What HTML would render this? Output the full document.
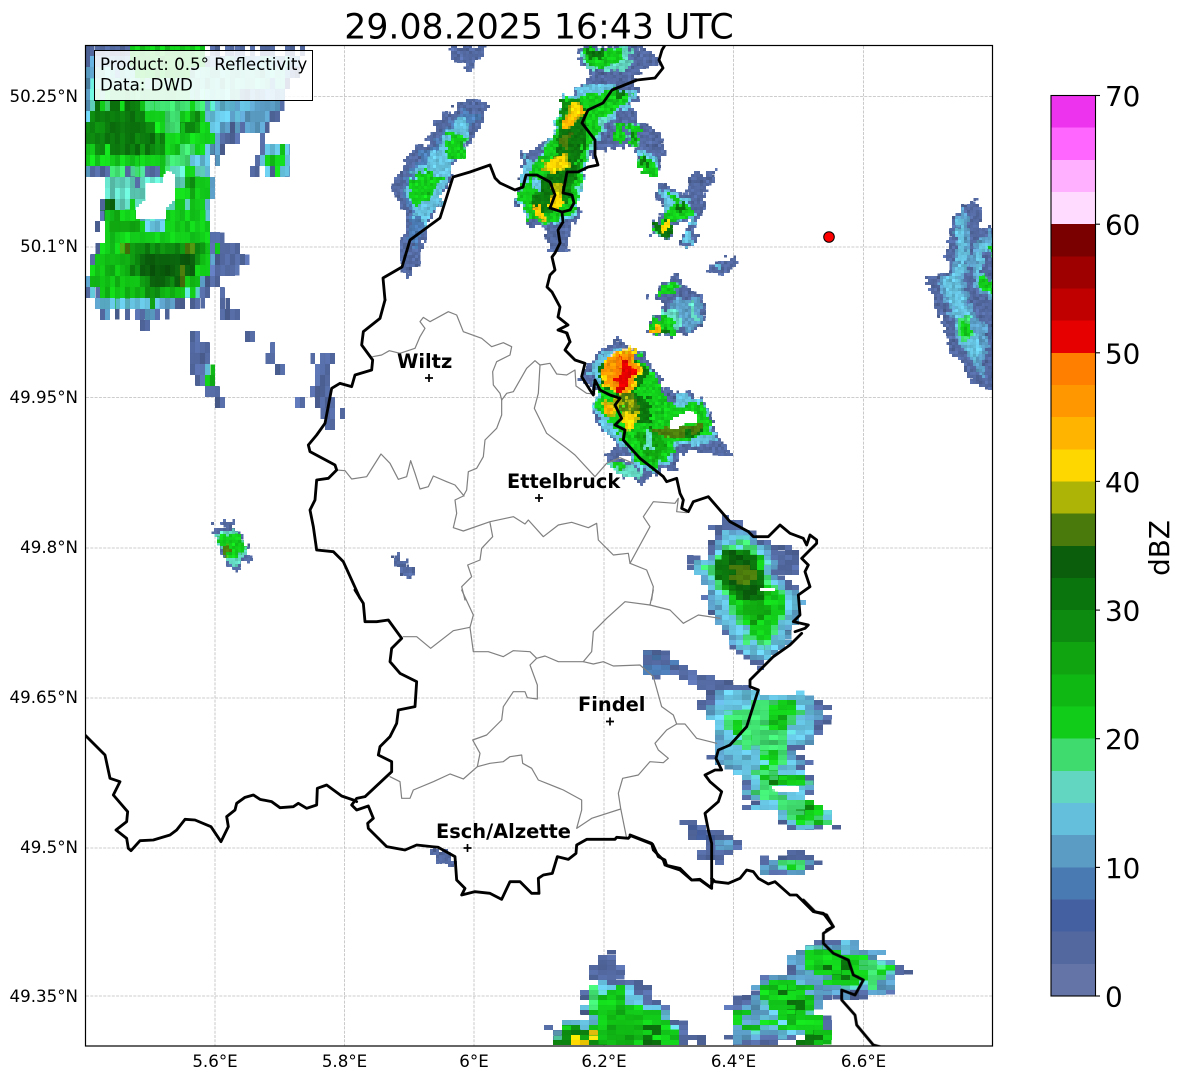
<!DOCTYPE html>
<html><head><meta charset="utf-8"><title>Radar</title>
<style>
html,body{margin:0;padding:0;background:#fff;width:1184px;height:1081px;overflow:hidden}
svg{display:block;font-family:"DejaVu Sans",sans-serif}
polygon{shape-rendering:crispEdges}
.b1{fill:#52689f}.b2{fill:#4560a0}.b3{fill:#4a7ab2}.c1{fill:#5a9cc4}.c2{fill:#64bfdc}.t{fill:#62d6c0}.l{fill:#3fdb6e}
.g{fill:#12cc1a}.g2{fill:#10b814}.g3{fill:#10a510}.g4{fill:#0d8a10}.g5{fill:#0b750d}.g6{fill:#0a5e0c}.ol{fill:#4a7a0c}.oy{fill:#aeb405}
.y{fill:#ffd700}.go{fill:#ffb400}.o{fill:#ff9800}.o2{fill:#ff7f00}.r{fill:#e60000}.w{fill:#fff}
.bd{fill:none;stroke:#000;stroke-width:8.5;stroke-linejoin:round;stroke-linecap:round}
.bs{fill:none;stroke:#000;stroke-width:2.83;stroke-linejoin:round;stroke-linecap:round}
.gy{fill:none;stroke:#808080;stroke-width:3.6;stroke-linejoin:round;stroke-linecap:round}
.tk{font-size:16.67px;fill:#000}
.cb{font-size:27.8px;fill:#000}
.lb{font-size:19.4px;font-weight:bold;fill:#000}
.gr{stroke:#bdbdbd;stroke-width:.8;stroke-dasharray:3 1.3}
</style></head>
<body>
<svg width="1184" height="1081" viewBox="0 0 1184 1081" xmlns="http://www.w3.org/2000/svg">
<defs>
<clipPath id="ax"><rect x="85.5" y="45.5" width="907" height="1000.5"/></clipPath>
<filter id="f3" filterUnits="userSpaceOnUse" x="85" y="45" width="908" height="1002" color-interpolation-filters="sRGB">
<feTurbulence type="fractalNoise" baseFrequency=".12" numOctaves="2" seed="3" result="n"/>
<feDisplacementMap in="SourceGraphic" in2="n" scale="14" xChannelSelector="R" yChannelSelector="G" result="d"/>
<feTurbulence type="fractalNoise" baseFrequency=".25" numOctaves="2" seed="8"/>
<feColorMatrix type="matrix" values="1 0 0 0 0 1 0 0 0 0 1 0 0 0 0 0 0 0 0 1" result="s"/>
<feComposite in="d" in2="s" operator="arithmetic" k1=".6" k2=".7" result="m"/>
<feFlood x="86" y="46" width="1" height="1"/><feComposite x="85" y="45" width="3" height="3"/><feTile x="85" y="45" width="908" height="1002" result="a"/><feComposite in="m" in2="a" operator="in"/><feMorphology operator="dilate" radius="1"/>
</filter>
<filter id="f30" filterUnits="userSpaceOnUse" x="85" y="45" width="908" height="1002" color-interpolation-filters="sRGB">
<feFlood x="86" y="46" width="1" height="1"/><feComposite x="85" y="45" width="3" height="3"/><feTile x="85" y="45" width="908" height="1002" result="a"/><feComposite in="SourceGraphic" in2="a" operator="in"/><feMorphology operator="dilate" radius="1"/>
</filter>
<filter id="fv" filterUnits="userSpaceOnUse" x="85" y="45" width="908" height="1002" color-interpolation-filters="sRGB">
<feTurbulence type="fractalNoise" baseFrequency=".12 .03" numOctaves="2" seed="5" result="n"/>
<feDisplacementMap in="SourceGraphic" in2="n" scale="22" xChannelSelector="R" yChannelSelector="G" result="d"/>
<feTurbulence type="fractalNoise" baseFrequency=".2 .08" numOctaves="2" seed="11"/>
<feColorMatrix type="matrix" values="1 0 0 0 0 1 0 0 0 0 1 0 0 0 0 0 0 0 0 1" result="s"/>
<feComposite in="d" in2="s" operator="arithmetic" k1=".6" k2=".7" result="m"/>
<feFlood x="87" y="50" width="1" height="1"/><feComposite x="85" y="45" width="5" height="11"/><feTile x="85" y="45" width="908" height="1002" result="a"/><feComposite in="m" in2="a" operator="in"/><feMorphology operator="dilate" radius="2 5"/>
</filter>
<filter id="fh" filterUnits="userSpaceOnUse" x="85" y="45" width="908" height="1002" color-interpolation-filters="sRGB">
<feTurbulence type="fractalNoise" baseFrequency=".03 .12" numOctaves="2" seed="7" result="n"/>
<feDisplacementMap in="SourceGraphic" in2="n" scale="22" xChannelSelector="R" yChannelSelector="G" result="d"/>
<feTurbulence type="fractalNoise" baseFrequency=".08 .2" numOctaves="2" seed="13"/>
<feColorMatrix type="matrix" values="1 0 0 0 0 1 0 0 0 0 1 0 0 0 0 0 0 0 0 1" result="s"/>
<feComposite in="d" in2="s" operator="arithmetic" k1=".6" k2=".7" result="m"/>
<feFlood x="89" y="47" width="1" height="1"/><feComposite x="85" y="45" width="9" height="5"/><feTile x="85" y="45" width="908" height="1002" result="a"/><feComposite in="m" in2="a" operator="in"/><feMorphology operator="dilate" radius="4 2"/>
</filter>
<filter id="fm" filterUnits="userSpaceOnUse" x="85" y="45" width="908" height="1002" color-interpolation-filters="sRGB">
<feTurbulence type="fractalNoise" baseFrequency=".06 .12" numOctaves="2" seed="21" result="n"/>
<feDisplacementMap in="SourceGraphic" in2="n" scale="18" xChannelSelector="R" yChannelSelector="G" result="d"/>
<feTurbulence type="fractalNoise" baseFrequency=".12 .22" numOctaves="2" seed="17"/>
<feColorMatrix type="matrix" values="1 0 0 0 0 1 0 0 0 0 1 0 0 0 0 0 0 0 0 1" result="s"/>
<feComposite in="d" in2="s" operator="arithmetic" k1=".6" k2=".7" result="m"/>
<feFlood x="88" y="47" width="1" height="1"/><feComposite x="85" y="45" width="7" height="5"/><feTile x="85" y="45" width="908" height="1002" result="a"/><feComposite in="m" in2="a" operator="in"/><feMorphology operator="dilate" radius="3 2"/>
</filter>
</defs>
<rect width="1184" height="1081" fill="#fff"/>

<!-- grid -->
<g class="gr">
<line x1="215" y1="46" x2="215" y2="1046"/><line x1="344.5" y1="46" x2="344.5" y2="1046"/><line x1="474" y1="46" x2="474" y2="1046"/><line x1="604" y1="46" x2="604" y2="1046"/><line x1="733.5" y1="46" x2="733.5" y2="1046"/><line x1="863.5" y1="46" x2="863.5" y2="1046"/>
<line x1="86" y1="96.5" x2="992" y2="96.5"/><line x1="86" y1="247" x2="992" y2="247"/><line x1="86" y1="397.5" x2="992" y2="397.5"/><line x1="86" y1="548" x2="992" y2="548"/><line x1="86" y1="698" x2="992" y2="698"/><line x1="86" y1="848" x2="992" y2="848"/><line x1="86" y1="996" x2="992" y2="996"/>
</g>

<g clip-path="url(#ax)">
<!-- West storms: vertical streaks -->
<g filter="url(#fv)">
<g transform="translate(85 40) scale(.33333)">
<polygon class="b1" points="-20,20 100,20 100,30 140,20 440,20 440,30 530,20 645,20 640,110 590,190 565,245 530,295 450,290 420,340 388,345 388,560 405,605 480,605 482,660 470,695 412,700 408,725 380,735 378,765 352,768 340,800 270,812 180,822 175,858 165,855 160,822 40,835 30,795 20,740 8,685 5,650 45,640 50,575 55,480 60,415 -20,412"/>
<polygon class="c1" points="-20,135 30,50 630,50 620,110 580,190 555,225 520,265 430,260 400,300 385,345 385,540 372,600 392,615 392,670 360,735 300,780 270,785 260,810 170,815 40,830 25,760 12,680 45,650 55,570 60,450 60,415 180,425 270,400 280,385 -20,385"/>
<polygon class="c2" points="-20,235 20,190 380,190 425,190 490,205 480,235 420,240 385,290 380,380 378,500 372,600 392,625 350,720 270,770 170,800 40,815 25,740 50,650 70,500 60,420 180,425 270,395 290,380 -20,380"/>
<polygon class="t" points="30,100 620,60 600,130 360,185 300,380 380,390 370,520 250,500 60,560 55,420 180,420 260,380 -20,370"/>
<polygon class="g" points="140,20 360,20 355,60 300,120 180,130 130,70"/>
<polygon class="l" points="30,160 150,130 300,150 370,180 380,300 250,395 100,395 -20,370"/>
<polygon class="g" points="-20,258 40,190 180,190 195,215 215,190 240,195 240,265 300,265 300,200 370,205 385,305 350,340 290,300 280,330 240,370 240,395 100,385 100,380 -20,372"/>
<polygon class="g" points="285,400 375,410 372,500 285,500"/>
<polygon class="g" points="240,510 372,510 372,600 390,610 390,670 355,710 350,735 290,770 170,785 130,785 45,795 25,730 15,690 20,650 50,640 55,570 90,540 55,530 55,495 150,500 160,560 240,565"/>
<polygon class="g2" points="20,660 140,600 380,610 370,690 280,770 130,785 50,780"/>
<polygon class="g4" points="-20,240 175,200 240,300 245,350 150,350 30,320 -20,300"/>
<polygon class="g5" points="50,195 175,195 180,240 230,320 150,340 60,320 55,260"/>
<polygon class="g4" points="285,235 340,230 375,270 340,290 300,265"/>
<polygon class="g4" points="130,610 340,605 345,640 325,700 280,740 180,785 165,745 135,680"/>
<polygon class="g6" points="150,650 320,640 320,700 220,745 170,700"/>
<polygon class="g4" points="300,430 340,440 335,465 300,470"/>
<polygon class="g6" points="55,495 75,495 75,535 55,530"/>
<polygon class="g3" points="90,530 150,540 160,570 60,570"/>
<polygon class="ol" points="115,605 130,605 130,640 115,640"/>
<polygon class="ol" points="295,605 320,605 315,635 300,640 298,700 292,700"/>
<polygon class="ol" points="275,710 292,710 288,740 275,738"/>
<polygon class="b1" points="500,360 530,340 555,305 610,315 610,395 580,400 578,425 555,425 555,395 510,390 508,420 498,420"/>
<polygon class="c2" points="530,370 555,310 605,320 605,395 530,390"/>
<polygon class="g" points="555,340 595,340 590,395 555,395"/>
<polygon class="b1" points="420,760 430,760 435,790 460,790 480,820 478,850 420,855 412,800"/>
</g>
<polygon class="b1" points="187,335 200,330 212,350 213,372 222,400 215,405 205,385 192,372 185,350"/>
<polygon class="c2" points="205,365 213,368 217,385 210,385"/>
<polygon class="g" points="210,372 218,372 219,384 212,384"/>
<polygon class="b1" points="247,335 252,335 254,350 248,350"/>
<polygon class="b1" points="265,350 272,350 285,378 282,385 272,372"/>
<polygon class="b1" points="292,396 300,392 303,410 297,412"/>
<polygon class="b1" points="312,358 328,357 333,390 339,430 328,430 322,420 310,385"/>
</g>

<!-- fine-grain storms -->
<g filter="url(#f3)">
<polygon class="b1" points="450,46 485,46 480,60 470,70 460,62 450,58"/>
<polygon class="b1" points="470,98 490,105 480,130 455,165 450,180 430,220 420,260 410,278 400,260 405,220 393,185 410,150 430,140 435,120"/>
<polygon class="b3" points="465,110 478,115 450,170 430,215 415,250 408,240 412,215 402,190 420,155 440,135"/>
<polygon class="c2" points="460,118 470,125 455,160 440,200 425,225 415,215 405,190 415,170 435,150"/>
<polygon class="g" points="448,132 468,135 462,160 448,160"/>
<polygon class="g" points="410,178 430,170 442,180 430,200 412,205"/>
<polygon class="b1" points="213,528 232,520 253,558 235,570 222,555"/>
<polygon class="t" points="215,538 232,525 248,552 235,568 224,552"/>
<polygon class="g" points="218,540 238,532 247,550 232,558 226,552"/>
<polygon class="ol" points="222,542 230,542 230,558 225,558"/>
<polygon class="b1" points="391,557 398,556 415,572 410,580 400,574"/>
<polygon class="b1" points="430,848 446,850 458,864 452,868 436,858"/>
<polygon class="b1" points="925,280 950,270 958,225 978,200 982,230 1000,225 1000,388 975,385 950,350 943,320"/>

<g transform="translate(900 190) scale(.33333)">
<polygon class="b1" points="230,25 225,100 240,130 290,105 290,600 240,595 210,540 150,470 130,370 80,285 85,265 120,250 170,235 135,210 150,130 165,70 200,40"/>
<polygon class="c1" points="170,90 195,60 215,110 200,230 240,130 290,130 290,340 230,300 215,230 190,260 210,350 270,420 255,500 250,570 215,520 165,440 145,340 100,280 160,250 170,210"/>
<polygon class="c2" points="170,90 190,90 200,230 175,260 205,370 235,480 225,530 175,440 150,340 130,280 160,255 175,220"/>
<polygon class="c2" points="228,185 290,135 290,340 235,290"/>
<polygon class="b1" points="245,190 290,175 290,300 250,250"/>
<polygon class="g" points="235,258 252,255 290,290 290,322 245,300"/>
<polygon class="g" points="268,170 290,170 290,195 268,195"/>
<polygon class="l" points="170,385 210,370 220,430 195,460 175,420"/>
<polygon class="g" points="178,395 200,390 217,420 200,450 185,420"/>
</g>

<g transform="translate(500 40) scale(.33333)">
<polygon class="b1" points="235,20 420,20 470,50 480,70 400,115 420,155 395,200 415,240 490,285 490,340 475,410 410,380 405,320 340,325 290,335 260,360 265,390 235,440 240,525 215,555 205,635 140,640 140,560 90,555 95,530 40,490 50,460 70,430 60,340 100,330 155,285 195,170 265,130 270,90 230,60"/>
<polygon class="t" points="235,40 300,25 400,25 380,80 330,100 265,90"/>
<polygon class="c2" points="195,170 265,135 340,140 410,155 380,215 320,240 300,300 270,340 255,395 235,500 225,530 190,550 95,540 45,480 70,440 70,345 100,370 150,290"/>
<polygon class="t" points="190,180 340,150 390,170 320,240 290,300 255,370 230,520 130,545 60,480 100,370 155,290"/>
<polygon class="g" points="250,30 360,25 370,60 300,90 260,70"/>
<polygon class="g5" points="260,30 320,30 310,60 275,60"/>
<polygon class="g" points="195,175 260,165 340,150 400,160 370,200 300,240 290,290 260,330 245,400 240,440 225,520 130,550 95,540 45,470 75,435 95,380 150,300 175,240"/>
<polygon class="g4" points="185,180 250,175 260,230 255,320 230,390 205,480 125,535 90,490 130,420 170,330"/>
<polygon class="g5" points="175,270 250,230 260,310 230,380 190,480 120,530 95,490 130,420 170,330"/>
<polygon class="g5" points="350,145 385,150 370,170 350,170"/>
<polygon class="ol" points="180,290 215,285 205,330 175,320"/>
<polygon class="oy" points="205,200 245,190 250,240 205,265 185,260"/>
<polygon class="go" points="230,180 250,215 215,260 180,265 205,215"/>
<polygon class="y" points="215,195 240,190 225,240 205,250"/>
<polygon class="oy" points="130,360 200,340 210,385 160,400 125,390"/>
<polygon class="y" points="145,355 195,350 205,380 160,395 130,385"/>
<polygon class="oy" points="160,430 185,430 195,475 150,480"/>
<polygon class="y" points="155,470 185,470 190,510 150,505"/>
<polygon class="go" points="105,490 135,510 140,545 115,540"/>
<polygon class="y" points="118,505 135,510 140,535 120,535"/>
<polygon class="c2" points="82,425 125,420 120,450 90,440"/>
<polygon class="b1" points="300,280 340,240 395,200 415,240 410,275 360,290 345,320"/>
<polygon class="g" points="345,250 375,250 370,300 340,310"/>
<polygon class="g" points="385,255 415,250 420,310 395,320"/>
<polygon class="g4" points="395,270 410,270 410,300 397,300"/>
<polygon class="c2" points="415,330 475,340 470,400 410,380"/>
<polygon class="g" points="412,350 440,348 470,375 470,410 425,400 408,380"/>
<polygon class="g5" points="415,358 440,355 455,375 420,380"/>

<polygon class="b1" points="480,425 560,465 560,410 640,395 645,410 620,455 600,460 620,510 585,560 590,615 530,620 535,590 565,580 575,540 530,550 505,600 460,585 465,545 490,520 470,470"/>
<polygon class="c2" points="475,445 495,450 565,480 590,530 560,580 590,612 535,612 560,575 570,530 530,540 515,500 490,525 480,480"/>
<polygon class="g" points="490,450 560,490 580,525 520,540 490,600 460,570 495,525 515,480"/>
<polygon class="g5" points="525,485 560,490 555,520 525,515"/>
<polygon class="g5" points="465,550 510,535 525,565 500,595 470,580"/>
<polygon class="y" points="480,545 510,545 510,570 490,570"/>
<polygon class="b1" points="620,680 660,660 710,650 710,680 655,705"/>
<polygon class="c2" points="645,672 665,672 660,688 648,685"/>
<polygon class="b1" points="520,700 550,735 610,770 610,860 580,875 520,890 435,885 435,865 490,810 480,780 450,770 470,755 490,740"/>
<polygon class="c1" points="520,780 600,770 610,850 580,870 540,850 520,820"/>
<polygon class="t" points="570,790 590,790 590,850 575,840"/>
<polygon class="g" points="480,750 520,725 550,740 520,760 490,765"/>
<polygon class="t" points="490,810 530,810 540,860 520,885 470,885"/>
<polygon class="g" points="490,825 525,835 525,885 445,885 440,860"/>
<polygon class="g5" points="480,860 510,870 510,885 470,885"/>
<polygon class="go" points="440,865 485,855 490,870 455,885 445,885"/>
<polygon class="o2" points="445,875 460,870 455,888 445,888"/>
</g>

<g transform="translate(560 330) scale(.33333)">
<polygon class="b1" points="180,30 240,70 300,130 320,180 360,195 390,180 430,210 470,290 490,350 520,365 515,375 440,370 400,370 360,375 350,410 300,430 240,460 180,435 130,375 155,370 170,340 105,270 110,190 60,140 110,70 150,40"/>
<polygon class="c2" points="120,70 180,55 240,85 295,150 300,190 340,230 360,190 420,205 460,280 470,330 400,345 340,350 340,390 280,425 220,445 210,370 130,290 105,230 110,170 90,130"/>
<polygon class="t" points="250,120 310,200 350,240 340,330 320,390 280,420 220,380 170,300 200,230"/>
<polygon class="g" points="130,85 240,80 310,180 340,230 420,215 450,270 460,320 400,325 350,330 340,370 310,395 280,420 220,380 190,330 120,250 110,220"/>
<polygon class="g5" points="120,100 240,85 265,135 235,175 220,180 280,220 270,285 340,310 430,285 450,305 350,325 280,300 215,260 170,200 115,150"/>
<polygon class="g3" points="230,310 280,300 320,350 290,395 240,365"/>
<polygon class="t" points="250,305 270,300 290,370 265,350"/>
<polygon class="y" points="130,90 215,50 245,130 205,195 165,195 130,160"/>
<polygon class="o" points="135,85 215,60 235,130 205,185 170,190 135,155"/>
<polygon class="o2" points="165,85 215,80 225,140 195,185 165,175"/>
<polygon class="r" points="175,80 215,100 220,140 185,190 160,185 175,150 185,110"/>
<polygon class="ol" points="175,195 225,190 240,240 195,255"/>
<polygon class="oy" points="195,210 220,215 215,240 200,235"/>
<polygon class="oy" points="125,215 180,205 180,250 140,260"/>
<polygon class="go" points="135,225 170,230 160,250 135,245"/>
<polygon class="oy" points="180,255 240,240 235,275 205,305 190,290"/>
<polygon class="y" points="190,260 235,250 215,295 195,300"/>
<polygon class="ol" points="280,290 340,300 420,280 430,295 350,320 290,310"/>
<polygon class="b1" points="135,375 210,390 260,430 240,462 190,440"/>
<polygon class="t" points="145,395 205,400 250,430 225,445 180,435"/>
<polygon class="g" points="160,395 190,395 205,415 175,425"/>
</g>
</g>

<!-- SE Luxembourg border storm -->
<g filter="url(#fm)">
<polygon class="b1" points="720,520 745,525 770,545 795,550 797,575 775,575 800,590 802,610 790,640 770,660 760,668 740,655 720,630 705,590 688,560 708,558 715,530"/>
<polygon class="c1" points="722,530 745,530 770,548 775,575 802,600 790,640 765,665 742,655 720,625 706,590 690,560 712,558"/>
<polygon class="c2" points="725,535 745,534 765,548 775,578 798,600 788,635 765,660 745,650 725,622 710,590 694,562 714,560"/>
<polygon class="l" points="725,542 745,540 760,552 768,578 790,595 780,625 765,650 750,640 732,612 718,585 702,565 716,562"/>
<polygon class="g" points="728,548 750,548 762,562 768,585 788,597 776,625 762,645 750,635 738,610 722,585 710,568 722,565"/>
<polygon class="g3" points="725,556 752,555 765,585 770,610 755,625 740,605 722,585"/>
<polygon class="g5" points="722,555 750,550 762,565 765,590 762,605 740,605 725,585 710,565"/>
<polygon class="g6" points="730,555 752,558 760,590 745,600 730,585"/>
<polygon class="ol" points="730,565 752,568 755,585 735,582"/>
</g>

<!-- east horizontal streak storms -->
<g filter="url(#fh)">
<g transform="translate(630 630) scale(.33333)">
<polygon class="b1" points="45,65 135,75 130,110 215,130 300,150 380,190 570,210 620,215 595,250 570,310 530,330 490,370 540,425 570,460 540,480 540,520 565,520 595,555 660,590 625,605 505,600 450,570 420,540 360,530 335,520 335,480 310,470 340,450 370,430 300,425 290,400 245,375 250,310 240,270 205,222 230,200 210,180 210,165 130,155 70,140 30,105"/>
<polygon class="b1" points="460,370 515,375 515,400 540,425 570,460 520,465 465,430"/>
<polygon class="b3" points="50,80 125,100 120,140 70,130"/>
<polygon class="c1" points="240,220 280,170 350,190 530,200 570,235 545,325 465,345 510,410 530,480 540,520 560,540 625,600 505,590 345,510 340,460 370,430 300,420 260,370 250,310"/>
<polygon class="c2" points="290,170 350,180 380,195 520,195 550,290 510,335 465,345 460,395 510,415 540,460 510,480 535,510 570,520 600,550 625,580 625,605 505,595 450,560 360,520 335,490 345,450 370,440 320,420 295,390 300,355 260,320 240,280 270,220"/>
<polygon class="l" points="270,270 380,230 430,205 495,210 500,270 470,340 460,400 430,450 420,480 520,510 565,520 595,560 595,590 510,590 450,540 390,505 370,470 385,420 410,350 330,340"/>
<polygon class="g" points="430,215 498,225 470,305 400,290 410,260"/>
<polygon class="g" points="300,270 350,270 350,300 325,320"/>
<polygon class="g" points="405,350 440,340 430,440 400,435"/>
<polygon class="g" points="430,445 510,440 570,460 510,475 430,470"/>
<polygon class="g" points="510,520 565,520 565,585 510,580"/>
<polygon class="g" points="345,320 400,310 380,340"/>
<polygon class="g4" points="508,525 545,525 545,545 510,545"/>
<polygon class="g5" points="425,455 455,455 455,470 425,470"/>
<polygon class="b1" points="165,580 280,595 310,630 340,650 340,660 305,670 270,680 300,695 270,700 205,690 210,660 230,650 185,625"/>
<polygon class="b2" points="190,585 240,600 245,625 190,630"/>
<polygon class="c1" points="250,640 340,648 340,662 270,665"/>
<polygon class="b1" points="370,685 440,680 470,668 500,668 560,685 560,710 525,730 470,740 400,735 395,718 370,715"/>
<polygon class="c1" points="400,695 445,685 530,690 530,725 400,730"/>
<polygon class="l" points="430,690 530,690 525,715 430,715"/>
<polygon class="g" points="465,690 500,690 498,720 470,720"/>
</g>
<g transform="translate(540 900) scale(.33333)">
<polygon class="b1" points="175,155 245,180 240,190 210,195 240,205 240,225 345,275 345,295 380,320 375,335 410,355 450,380 445,400 490,410 485,425 445,420 440,460 45,460 45,425 60,395 15,380 20,365 60,380 100,360 155,355 150,335 120,325 125,318 150,320 130,285 95,275 100,265 130,275 145,255 190,255 185,250 150,240 165,200"/>
<polygon class="c2" points="190,240 260,260 340,300 370,340 410,370 410,460 60,460 70,365 150,340 135,280"/>
<polygon class="l" points="140,260 190,260 180,310 150,320"/>
<polygon class="g" points="230,265 260,270 265,305 330,330 405,380 405,460 60,460 50,420 70,365 150,390 165,310 180,285"/>
<polygon class="g4" points="60,370 150,385 190,410 190,460 50,460"/>
<polygon class="g5" points="320,400 365,375 360,460 320,460"/>
<polygon class="g2" points="190,340 300,345 300,430 190,430"/>
<polygon class="y" points="143,397 185,405 185,417 143,410"/>
<polygon class="y" points="90,423 130,430 130,450 90,450"/>
<polygon class="b1" points="755,160 790,160 790,150 830,130 905,120 940,120 945,160 1015,165 1055,175 1060,190 1095,190 1095,228 1060,230 1060,270 1025,290 950,290 870,280 865,315 840,320 865,365 865,435 785,430 770,415 740,425 740,460 570,460 580,375 580,335 545,325 550,310 590,305 590,285 670,275 670,240 715,230 720,212 755,195"/>
<polygon class="c1" points="580,340 630,300 670,250 755,200 755,160 900,125 940,125 1055,180 1055,270 960,280 870,270 840,310 860,370 860,430 700,400 580,430"/>
<polygon class="c2" points="670,280 720,240 800,230 830,330 790,410 710,410 670,360"/>
<polygon class="g" points="795,150 980,165 1055,185 1055,205 1015,215 950,265 870,260 860,250 800,225"/>
<polygon class="l" points="980,170 1015,170 1020,260 980,270"/>
<polygon class="g" points="715,235 750,230 790,260 825,270 825,350 790,360 760,385 710,380 710,320 670,310 670,255"/>
<polygon class="g" points="785,350 825,350 865,400 865,430 785,430"/>
<polygon class="g" points="620,365 660,365 700,370 700,385 660,385 640,405 620,400"/>
<polygon class="g" points="580,335 620,335 620,380 580,380"/>
<polygon class="g5" points="710,260 750,250 750,300 715,295"/>
<polygon class="g5" points="750,310 790,310 790,340 750,340"/>
<polygon class="g5" points="905,185 935,185 935,235 905,235"/>
<polygon class="g5" points="830,145 865,145 865,165 830,165"/>
<polygon class="g5" points="785,400 825,400 825,425 785,425"/>
<polygon class="g5" points="868,205 905,205 905,230 868,230"/>
<polygon class="c2" points="905,122 940,122 940,160 905,155"/>
</g>
</g>

<!-- white holes in echoes -->
<g filter="url(#f30)">
<polygon class="w" transform="translate(85 40) scale(.33333)" points="185,430 235,425 240,395 270,400 270,475 245,505 245,535 155,535 155,500 185,480"/>
<polygon class="w" transform="translate(560 330) scale(.33333)" points="330,270 380,245 410,250 410,275 360,285 350,300 330,295"/>
<polygon class="w" transform="translate(560 330) scale(.33333)" points="170,380 215,382 215,402 200,395"/>
<polygon class="w" points="760,587 775,587 775,592 760,591"/>
<polygon class="w" transform="translate(630 630) scale(.33333)" points="425,470 510,470 510,488 470,487 420,478"/>
</g>

<!-- canton boundaries -->
<g transform="translate(300 300) scale(.33333)">
<polyline class="gy" points="218,170 245,165 268,152 300,160 345,145 360,110 375,85 360,65 370,52 390,65 445,35 470,45 490,95 545,115 575,140 610,128 635,140 630,165 590,185 578,215 580,255 600,280 605,300 605,345 590,385 555,420 550,470 530,505 505,515 500,570 490,588 465,600 470,640 460,683 490,693 570,665 640,650 675,672 685,660 730,710 775,675 815,667 865,683 890,670 895,720 940,765 985,760 990,790 1040,810 1060,860 1055,900"/>
<polyline class="gy" points="110,510 135,512 155,537 200,530 243,462 270,490 295,538 320,530 332,482 345,520 360,567 385,560 400,528 440,545 465,555 492,588"/>
<polyline class="gy" points="605,300 620,280 640,275 680,205 705,182 720,195 750,190 770,222 800,225 825,210 828,258 860,280 885,282"/>
<polyline class="gy" points="720,195 715,280 703,325 740,400 800,445 825,465 885,530 920,490 960,473 1000,490"/>
<polyline class="gy" points="570,668 578,710 545,745 540,780 503,795 515,830 485,860 495,900"/>
<polyline class="gy" points="990,790 1050,680 1030,650 1060,605 1125,610 1135,595 1130,635 1160,638"/>
</g>
<g transform="translate(300 590) scale(.33333)">
<polyline class="gy" points="485,0 520,75 510,112 460,122 392,175 350,140 310,140"/>
<polyline class="gy" points="510,112 520,185 565,185 610,200 640,182 690,185 710,205 690,225 712,285 712,327 682,323 675,305 640,305 610,350 605,390 560,435 518,450 540,490 532,530 490,567 450,552 400,575 340,600 330,625 305,625 300,575 270,560"/>
<polyline class="gy" points="1060,0 1050,45 975,35 920,85 880,125 875,185 850,215 775,215 735,198 710,205"/>
<polyline class="gy" points="850,215 880,222 910,215 940,228 1020,225 1060,260 1085,350 1120,375 1130,402 1100,420 1065,460 1075,480 1105,505 1090,518 1050,515 1015,555 968,565 955,610 962,655 980,745"/>
<polyline class="gy" points="1130,402 1155,402 1190,445 1250,460"/>
<polyline class="gy" points="1050,45 1110,60 1150,100 1195,75 1260,85"/>
<polyline class="gy" points="532,530 570,520 610,515 630,500 665,495 668,520 695,535 715,570 740,580 790,600 845,630 845,660 830,715 875,685 962,657"/>
</g>

<!-- national borders -->
<polyline class="bs" points="385,300 383,278 402,267 410,240 440,218 453,177 470,172 490,165 495,178 500,183 515,190 523,187 526,175 537,175 550,182 555,195 550,208 562,212 570,210 574,203 572,195 563,193 567,172 578,172 588,167 598,165 595,155 595,140 582,123 588,110 603,103 612,90 637,80 655,78 663,68 659,60 662,50 665,45"/>
<polyline class="bs" points="562,212 563,222 558,230 560,243 555,253 552,257 555,270 550,275 547,287 552,292 560,307 558,317 568,325 558,330 567,333 570,342"/>
<g transform="translate(560 330) scale(.33333)">
<polyline class="bd" points="20,10 30,35 15,60 45,90 75,100 65,140 90,180 100,195 105,150 120,180 150,195 180,205 165,225 185,265 165,285 195,300 190,330 240,385 285,420 310,440 320,455 350,445 360,490 370,510 365,535 385,545 400,515 445,500 510,575 565,605 580,620 625,620 660,585 690,610 730,625 740,645 750,615 770,630 770,640 725,685 745,705 735,725 750,770 715,795 720,855 700,875 745,885 735,895 705,905"/>
</g>
<g transform="translate(630 630) scale(.33333)">
<polyline class="bd" points="515,10 480,45 430,80 390,120 360,150 360,170 385,180 350,290 300,345 265,360 258,385 275,420 255,420 225,435 240,455 275,485 265,515 225,550 235,600 245,640 245,745 245,775 210,750 185,750 150,715 105,705 100,690 70,660 65,640 0,615"/>
<polyline class="bd" points="245,745 255,755 295,760 330,745 350,720 370,725 385,745 415,762 435,755 480,795 500,795 550,845 580,850 610,890 590,900"/>
</g>
<g transform="translate(540 900) scale(.33333)">
<polyline class="bd" points="790,0 825,35 860,45 880,80 850,100 850,130 880,160 925,180 940,225 970,240 945,285 905,270 905,300 945,345 950,375 1000,435 1020,440"/>
</g>
<g transform="translate(300 300) scale(.33333)">
<polyline class="bd" points="255,0 240,55 190,95 185,135 218,180 215,210 165,225 155,260 120,250 95,265 75,370 50,405 25,435 30,455 105,495 110,510 85,535 50,540 45,600 30,630 40,680 50,750 100,755 130,785 180,895"/>
</g>
<g transform="translate(300 590) scale(.33333)">
<polyline class="bd" points="165,0 190,40 195,95 230,95 265,90 305,145 275,175 270,215 300,250 350,275 345,350 295,360 290,400 270,440 240,470 235,495 275,515 275,545 195,620 170,625 155,645 170,660 205,648 220,685 203,700 205,715 260,770 315,780 350,765 415,772 465,800 470,870 495,895 485,915 525,905 570,910 605,928 630,875 660,875 695,910 717,910 715,865 730,855 757,850 772,800 805,808 828,790 830,765 860,748 945,748 950,742 985,745 992,737 1058,763 1075,800 1095,810 1100,827 1140,840 1175,870 1200,868 1232,892 1240,870"/>
</g>
<g transform="translate(85 720) scale(.33333)">
<polyline class="bd" points="0,45 60,105 75,175 105,185 85,225 128,275 125,305 93,330 125,355 130,385 138,392 165,362 205,360 255,345 275,330 300,298 330,300 378,320 408,365 430,320 425,290 450,270 455,250 480,232 505,225 525,238 560,245 585,263 625,260 640,250 665,265 695,255 697,205 725,195 770,228 805,240 815,245"/>
</g>

<!-- markers -->
<g stroke="#000" stroke-width="1.7" fill="none">
<path d="M425 378h8M429 374v8"/><path d="M535 498h8M539 494v8"/><path d="M606 721.5h8M610 717.5v8"/><path d="M463.5 848h8M467.5 844v8"/>
</g>
<text class="lb" x="397" y="368">Wiltz</text>
<text class="lb" x="507" y="488">Ettelbruck</text>
<text class="lb" x="578" y="711">Findel</text>
<text class="lb" x="436" y="838">Esch/Alzette</text>
<circle cx="829" cy="237" r="5.3" fill="#f00" stroke="#000" stroke-width="1"/>

<!-- legend box -->
<rect x="94.5" y="50.5" width="218" height="50" fill="#fff" fill-opacity=".85" stroke="#000" stroke-width="1"/>
<text class="tk" x="100" y="70">Product: 0.5° Reflectivity</text>
<text class="tk" x="100" y="90.7">Data: DWD</text>
</g>

<!-- axes frame -->
<rect x="85.5" y="45.5" width="907" height="1000.5" fill="none" stroke="#000" stroke-width="1.2"/>

<!-- title -->
<text x="539" y="38.5" font-size="34.7" text-anchor="middle" fill="#000">29.08.2025 16:43 UTC</text>

<!-- tick labels -->
<g class="tk" text-anchor="end">
<text x="78" y="102">50.25°N</text><text x="78" y="252">50.1°N</text><text x="78" y="403">49.95°N</text><text x="78" y="553">49.8°N</text><text x="78" y="703">49.65°N</text><text x="78" y="853">49.5°N</text><text x="78" y="1002">49.35°N</text>
</g>
<g class="tk" text-anchor="middle">
<text x="215" y="1067">5.6°E</text><text x="344.5" y="1067">5.8°E</text><text x="474" y="1067">6°E</text><text x="604" y="1067">6.2°E</text><text x="733.5" y="1067">6.4°E</text><text x="863.5" y="1067">6.6°E</text>
</g>

<!-- colorbar -->
<g shape-rendering="crispEdges">
<rect x="1051" y="963.84" width="44" height="32.16" fill="#6474a6"/>
<rect x="1051" y="931.68" width="44" height="32.16" fill="#52689f"/>
<rect x="1051" y="899.52" width="44" height="32.16" fill="#4560a0"/>
<rect x="1051" y="867.36" width="44" height="32.16" fill="#4a7ab2"/>
<rect x="1051" y="835.2" width="44" height="32.16" fill="#5a9cc4"/>
<rect x="1051" y="803.04" width="44" height="32.16" fill="#64bfdc"/>
<rect x="1051" y="770.88" width="44" height="32.16" fill="#62d6c0"/>
<rect x="1051" y="738.72" width="44" height="32.16" fill="#3fdb6e"/>
<rect x="1051" y="706.56" width="44" height="32.16" fill="#12cc1a"/>
<rect x="1051" y="674.4" width="44" height="32.16" fill="#10b814"/>
<rect x="1051" y="642.24" width="44" height="32.16" fill="#10a510"/>
<rect x="1051" y="610.08" width="44" height="32.16" fill="#0d8a10"/>
<rect x="1051" y="577.92" width="44" height="32.16" fill="#0b750d"/>
<rect x="1051" y="545.76" width="44" height="32.16" fill="#0a5e0c"/>
<rect x="1051" y="513.6" width="44" height="32.16" fill="#4a7a0c"/>
<rect x="1051" y="481.44" width="44" height="32.16" fill="#aeb405"/>
<rect x="1051" y="449.28" width="44" height="32.16" fill="#ffd700"/>
<rect x="1051" y="417.12" width="44" height="32.16" fill="#ffb400"/>
<rect x="1051" y="384.96" width="44" height="32.16" fill="#ff9800"/>
<rect x="1051" y="352.8" width="44" height="32.16" fill="#ff7f00"/>
<rect x="1051" y="320.64" width="44" height="32.16" fill="#e60000"/>
<rect x="1051" y="288.48" width="44" height="32.16" fill="#c00000"/>
<rect x="1051" y="256.32" width="44" height="32.16" fill="#9e0000"/>
<rect x="1051" y="224.16" width="44" height="32.16" fill="#7a0000"/>
<rect x="1051" y="192" width="44" height="32.16" fill="#ffdcff"/>
<rect x="1051" y="159.84" width="44" height="32.16" fill="#ffb0ff"/>
<rect x="1051" y="127.68" width="44" height="32.16" fill="#ff66ff"/>
<rect x="1051" y="95.52" width="44" height="32.16" fill="#ee33ee"/>
</g>
<rect x="1051" y="95.5" width="44.5" height="900.5" fill="none" stroke="#000" stroke-width="1.1"/>
<g stroke="#000" stroke-width="1.1">
<line x1="1095" y1="95.5" x2="1100" y2="95.5"/><line x1="1095" y1="224.2" x2="1100" y2="224.2"/><line x1="1095" y1="352.8" x2="1100" y2="352.8"/><line x1="1095" y1="481.4" x2="1100" y2="481.4"/><line x1="1095" y1="610.1" x2="1100" y2="610.1"/><line x1="1095" y1="738.7" x2="1100" y2="738.7"/><line x1="1095" y1="867.4" x2="1100" y2="867.4"/><line x1="1095" y1="996" x2="1100" y2="996"/>
</g>
<g class="cb">
<text x="1105" y="106">70</text><text x="1105" y="234.5">60</text><text x="1105" y="363.3">50</text><text x="1105" y="491.9">40</text><text x="1105" y="620.6">30</text><text x="1105" y="749.2">20</text><text x="1105" y="877.9">10</text><text x="1105" y="1006.5">0</text>
</g>
<text class="cb" transform="translate(1169 548) rotate(-90)" text-anchor="middle">dBZ</text>
</svg>
</body></html>
